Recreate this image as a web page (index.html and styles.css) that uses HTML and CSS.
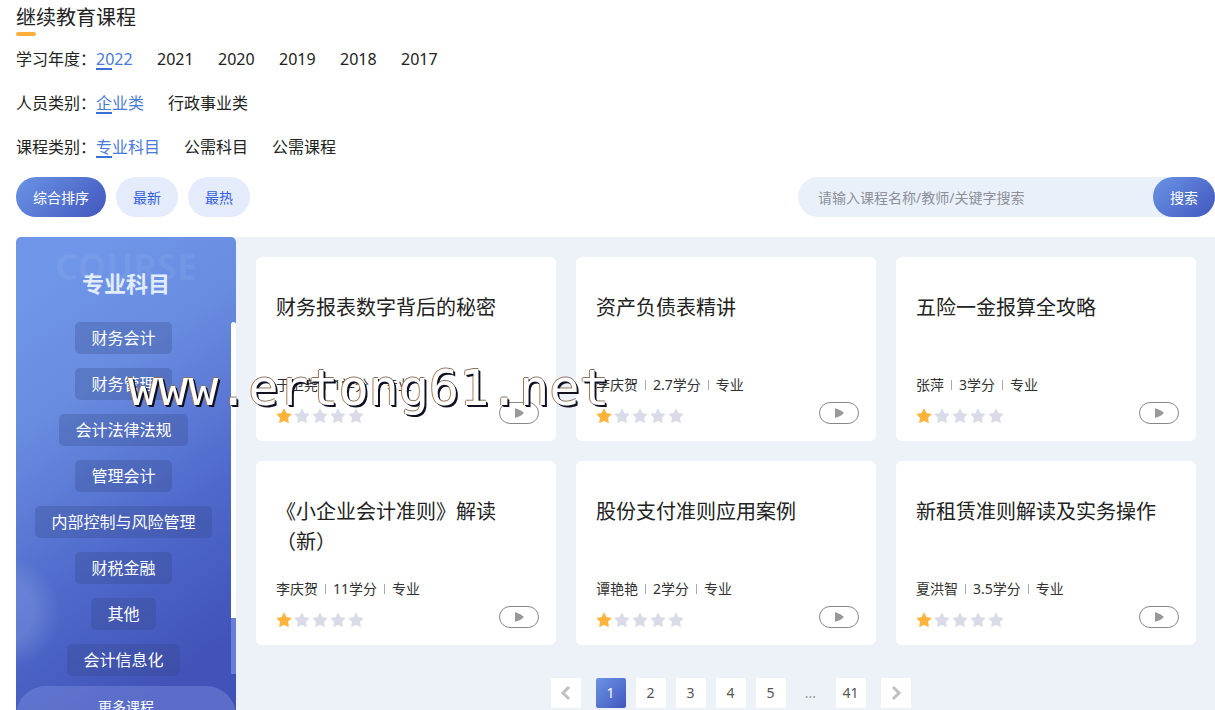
FILE: index.html
```html
<!DOCTYPE html>
<html lang="zh-CN">
<head>
    <meta charset="UTF-8">
    <meta name="viewport" content="width=device-width, initial-scale=1.0">
    <title>继续教育课程</title>
    <link rel="stylesheet" href="styles.css">
</head>
<body>
    <svg class="sprite" aria-hidden="true">
        <symbol id="star" viewBox="0 0 16 16">
            <path d="M8 1.500l2.100 4.200 4.600.700-3.300 3.300.8 4.600L8 12.200l-4.200 2.100.8-4.600L1.300 6.400l4.600-.7z" stroke-width="1.200" stroke-linejoin="round"/>
        </symbol>
        <symbol id="play" viewBox="0 0 12 12">
            <path d="M2 2.200Q2 1 3.200 1.400Q8 2.800 10.300 5.200Q11 6 10.300 6.800Q8 9.200 3.200 10.600Q2 11 2 9.800z"/>
        </symbol>
    </svg>

    <header class="page-header">
        <h1>继续教育课程</h1>
        <div class="filter years">
            <span class="filter-label">学习年度：</span>
            <a href="#" class="active">2022</a>
            <a href="#">2021</a>
            <a href="#">2020</a>
            <a href="#">2019</a>
            <a href="#">2018</a>
            <a href="#">2017</a>
        </div>
        <div class="filter">
            <span class="filter-label">人员类别：</span>
            <a href="#" class="active">企业类</a>
            <a href="#">行政事业类</a>
        </div>
        <div class="filter">
            <span class="filter-label">课程类别：</span>
            <a href="#" class="active">专业科目</a>
            <a href="#">公需科目</a>
            <a href="#">公需课程</a>
        </div>
    </header>

    <div class="toolbar">
        <button type="button" class="pill pill-primary">综合排序</button>
        <button type="button" class="pill">最新</button>
        <button type="button" class="pill">最热</button>
        <form class="search">
            <input type="text" aria-label="搜索课程" placeholder="请输入课程名称/教师/关键字搜索">
            <button type="button" class="pill pill-primary">搜索</button>
        </form>
    </div>

    <div class="content">
        <aside class="sidebar">
            <div class="sidebar-title">
                <span class="ghost" aria-hidden="true">COURSE</span>
                <h2>专业科目</h2>
            </div>
            <nav class="subjects">
                <div class="subject-list">
                    <a href="#">财务会计</a>
                    <a href="#">财务管理</a>
                    <a href="#">会计法律法规</a>
                    <a href="#">管理会计</a>
                    <a href="#">内部控制与风险管理</a>
                    <a href="#">财税金融</a>
                    <a href="#">其他</a>
                    <a href="#">会计信息化</a>
                </div>
                <div class="track"><div class="thumb"></div></div>
            </nav>
            <button type="button" class="more">更多课程</button>
        </aside>

        <main class="courses">
            <div class="grid">
                <article class="card">
                    <h3>财务报表数字背后的秘密</h3>
                    <p class="meta"><span>于卫尧</span><span>1学分</span><span>专业</span></p>
                    <div class="card-foot">
                        <div class="stars"><svg class="on"><use href="#star"/></svg><svg><use href="#star"/></svg><svg><use href="#star"/></svg><svg><use href="#star"/></svg><svg><use href="#star"/></svg></div>
                        <button type="button" class="play" aria-label="播放"><svg><use href="#play"/></svg></button>
                    </div>
                </article>
                <article class="card">
                    <h3>资产负债表精讲</h3>
                    <p class="meta"><span>李庆贺</span><span>2.7学分</span><span>专业</span></p>
                    <div class="card-foot">
                        <div class="stars"><svg class="on"><use href="#star"/></svg><svg><use href="#star"/></svg><svg><use href="#star"/></svg><svg><use href="#star"/></svg><svg><use href="#star"/></svg></div>
                        <button type="button" class="play" aria-label="播放"><svg><use href="#play"/></svg></button>
                    </div>
                </article>
                <article class="card">
                    <h3>五险一金报算全攻略</h3>
                    <p class="meta"><span>张萍</span><span>3学分</span><span>专业</span></p>
                    <div class="card-foot">
                        <div class="stars"><svg class="on"><use href="#star"/></svg><svg><use href="#star"/></svg><svg><use href="#star"/></svg><svg><use href="#star"/></svg><svg><use href="#star"/></svg></div>
                        <button type="button" class="play" aria-label="播放"><svg><use href="#play"/></svg></button>
                    </div>
                </article>
                <article class="card">
                    <h3>《小企业会计准则》解读（新）</h3>
                    <p class="meta"><span>李庆贺</span><span>11学分</span><span>专业</span></p>
                    <div class="card-foot">
                        <div class="stars"><svg class="on"><use href="#star"/></svg><svg><use href="#star"/></svg><svg><use href="#star"/></svg><svg><use href="#star"/></svg><svg><use href="#star"/></svg></div>
                        <button type="button" class="play" aria-label="播放"><svg><use href="#play"/></svg></button>
                    </div>
                </article>
                <article class="card">
                    <h3>股份支付准则应用案例</h3>
                    <p class="meta"><span>谭艳艳</span><span>2学分</span><span>专业</span></p>
                    <div class="card-foot">
                        <div class="stars"><svg class="on"><use href="#star"/></svg><svg><use href="#star"/></svg><svg><use href="#star"/></svg><svg><use href="#star"/></svg><svg><use href="#star"/></svg></div>
                        <button type="button" class="play" aria-label="播放"><svg><use href="#play"/></svg></button>
                    </div>
                </article>
                <article class="card">
                    <h3>新租赁准则解读及实务操作</h3>
                    <p class="meta"><span>夏洪智</span><span>3.5学分</span><span>专业</span></p>
                    <div class="card-foot">
                        <div class="stars"><svg class="on"><use href="#star"/></svg><svg><use href="#star"/></svg><svg><use href="#star"/></svg><svg><use href="#star"/></svg><svg><use href="#star"/></svg></div>
                        <button type="button" class="play" aria-label="播放"><svg><use href="#play"/></svg></button>
                    </div>
                </article>
            </div>

            <nav class="pagination" aria-label="分页">
                <button type="button" class="prev" aria-label="上一页"><svg viewBox="0 0 16 16"><path d="M11 2L5 8l6 6"/></svg></button>
                <button type="button" class="current">1</button>
                <button type="button">2</button>
                <button type="button">3</button>
                <button type="button">4</button>
                <button type="button">5</button>
                <span class="dots">...</span>
                <button type="button">41</button>
                <button type="button" class="next" aria-label="下一页"><svg viewBox="0 0 16 16"><path d="M5 2l6 6-6 6"/></svg></button>
            </nav>
        </main>
    </div>

    <div class="watermark">www.ertong61.net</div>
</body>
</html>
```

FILE: styles.css
```css
* {
    box-sizing: border-box;
}
body {
    display: flex;
    flex-direction: column;
    height: 100vh;
    margin: 0;
    padding-left: 16px;
    overflow: hidden;
    position: relative;
    background-color: #fff;
    color: #222;
    font-family: "Noto Sans", "Noto Sans CJK SC", sans-serif;
    font-size: 16px;
}
h1, h2, h3, p {
    margin: 0;
    font-weight: normal;
}
a {
    color: inherit;
    text-decoration: none;
}
button, input {
    font-family: inherit;
    font-size: 14px;
    border: 0;
    padding: 0;
}
button {
    cursor: pointer;
}
.sprite {
    position: absolute;
    width: 0;
    height: 0;
}

/* Filters */
.page-header {
    padding-top: 4px;
}
h1 {
    font-size: 20px;
    line-height: 28px;
}
h1::after {
    content: "";
    display: block;
    width: 20px;
    height: 4px;
    border-radius: 2px;
    background-color: #ffb03a;
}
.filter {
    display: flex;
    gap: 24px;
    height: 24px;
    margin-bottom: 20px;
    line-height: 22px;
}
.years {
    margin-top: 12px;
}
.years a {
    width: 37px;
}
.filter-label {
    width: 80px;
    margin-right: -24px;
}
.filter .active {
    color: #4a7ad8;
}
.filter .active::after {
    content: "";
    display: block;
    width: 16px;
    height: 2px;
    margin-top: -2px;
    background-color: #3a6fd8;
}

/* Sort buttons and search */
.toolbar {
    display: flex;
    gap: 10px;
    margin: -3px 0 20px;
}
.pill {
    height: 40px;
    padding: 0 17px;
    border-radius: 20px;
    background-color: #e4ecfc;
    color: #3560dd;
}
.pill-primary {
    background: linear-gradient(135deg, #6a94e6, #4257bd);
    color: #fff;
}
.search {
    display: flex;
    width: 417px;
    margin-left: auto;
    border-radius: 20px;
    background-color: #eaf0f9;
}
.search input {
    flex: 1;
    min-width: 0;
    padding-left: 20px;
    background: none;
    outline: none;
}
.search input::placeholder {
    color: #8d9099;
}

/* Sidebar */
.content {
    display: flex;
    flex: 1;
    align-items: stretch;
    min-height: 0;
}
.sidebar {
    display: flex;
    flex-direction: column;
    flex: none;
    width: 220px;
    overflow: hidden;
    border-radius: 5px 5px 0 0;
    background:
        radial-gradient(circle at -12px 375px, rgba(140, 165, 225, 0.35) 30px, transparent 56px),
        linear-gradient(145deg, #6f96e8 10%, #688ce0 32%, #4f69cb 62%, #4153b8 88%);
}
.sidebar-title {
    position: relative;
    flex: none;
    height: 85px;
    padding-top: 30px;
    text-align: center;
}
.ghost {
    position: absolute;
    top: 14px;
    left: 0;
    right: 0;
    font-size: 36px;
    line-height: 32px;
    font-weight: bold;
    color: rgba(255, 255, 255, 0.06);
}
.sidebar h2 {
    font-size: 22px;
    line-height: 32px;
    font-weight: bold;
    color: #e2ecff;
}
.subjects {
    display: flex;
    flex: none;
}
.subject-list {
    display: flex;
    flex: 1;
    flex-direction: column;
    align-items: center;
    gap: 14px;
    padding-bottom: 10px;
}
.subject-list a {
    padding: 0 16px;
    border-radius: 5px;
    background-color: rgba(50, 70, 130, 0.28);
    color: #fff;
    line-height: 32px;
}
.track {
    width: 5px;
    margin-bottom: 12px;
    background-color: #6580d6;
}
.thumb {
    height: 84%;
    border-radius: 3px 3px 0 0;
    background-color: #fff;
}
.more {
    flex: none;
    height: 40px;
    border-radius: 30px 30px 0 0;
    background-color: rgba(130, 150, 225, 0.4);
    color: #fff;
}

/* Courses */
.courses {
    flex: 1;
    min-width: 0;
    padding: 20px 19px 20px 20px;
    background-color: #edf2f9;
}
.grid {
    display: grid;
    grid-template-columns: repeat(3, minmax(0, 1fr));
    gap: 20px;
}
.card {
    display: flex;
    flex-direction: column;
    min-height: 184px;
    padding: 36px 17px 16px 20px;
    border-radius: 6px;
    background-color: #fff;
}
.card h3 {
    height: 80px;
    padding-right: 20px;
    font-size: 20px;
    line-height: 30px;
}
.meta {
    display: flex;
    align-items: center;
    font-size: 14px;
    line-height: 24px;
    color: #333;
}
.meta span + span::before {
    content: "";
    display: inline-block;
    width: 1px;
    height: 10px;
    margin: 0 7px;
    background-color: #aaa;
}
.card-foot {
    display: flex;
    align-items: flex-end;
    justify-content: space-between;
    margin-top: 5px;
}
.stars {
    display: flex;
    gap: 2px;
}
.stars svg {
    width: 16px;
    height: 16px;
    fill: #d9dce8;
    stroke: #d9dce8;
}
.stars .on {
    fill: #fcb43c;
    stroke: #fcb43c;
}
.play {
    display: flex;
    align-items: center;
    justify-content: center;
    width: 40px;
    height: 22px;
    border: 1px solid #888;
    border-radius: 11px;
    background-color: #fff;
}
.play svg {
    width: 12px;
    height: 12px;
    fill: #999;
}

/* Pagination */
.pagination {
    display: flex;
    justify-content: center;
    gap: 10px;
    margin-top: 33px;
    padding-left: 9px;
}
.pagination button, .dots {
    width: 30px;
    height: 30px;
    border-radius: 2px;
    background-color: #fff;
    color: #555;
    font-size: 14px;
    line-height: 30px;
    text-align: center;
}
.pagination .dots {
    background: none;
    color: #999;
}
.pagination .current {
    background: linear-gradient(135deg, #6a94e6, #4257bd);
    color: #fff;
}
.pagination svg {
    display: block;
    width: 16px;
    height: 16px;
    margin: 0 auto;
    fill: none;
    stroke: #c0c0c0;
    stroke-width: 3;
}
.pagination .prev {
    margin-right: 5px;
}
.pagination .next {
    margin-left: 5px;
}

/* Watermark over the page */
.watermark {
    position: absolute;
    left: 128px;
    top: 360px;
    font-family: "DejaVu Sans Mono", monospace;
    font-size: 50px;
    line-height: 56px;
    color: #fff;
    text-shadow: 1px 1px 0 #112, 2px 2px 0 #112, -1px 0 0 #a87850, 0 -1px 0 #887060;
    pointer-events: none;
}
```
